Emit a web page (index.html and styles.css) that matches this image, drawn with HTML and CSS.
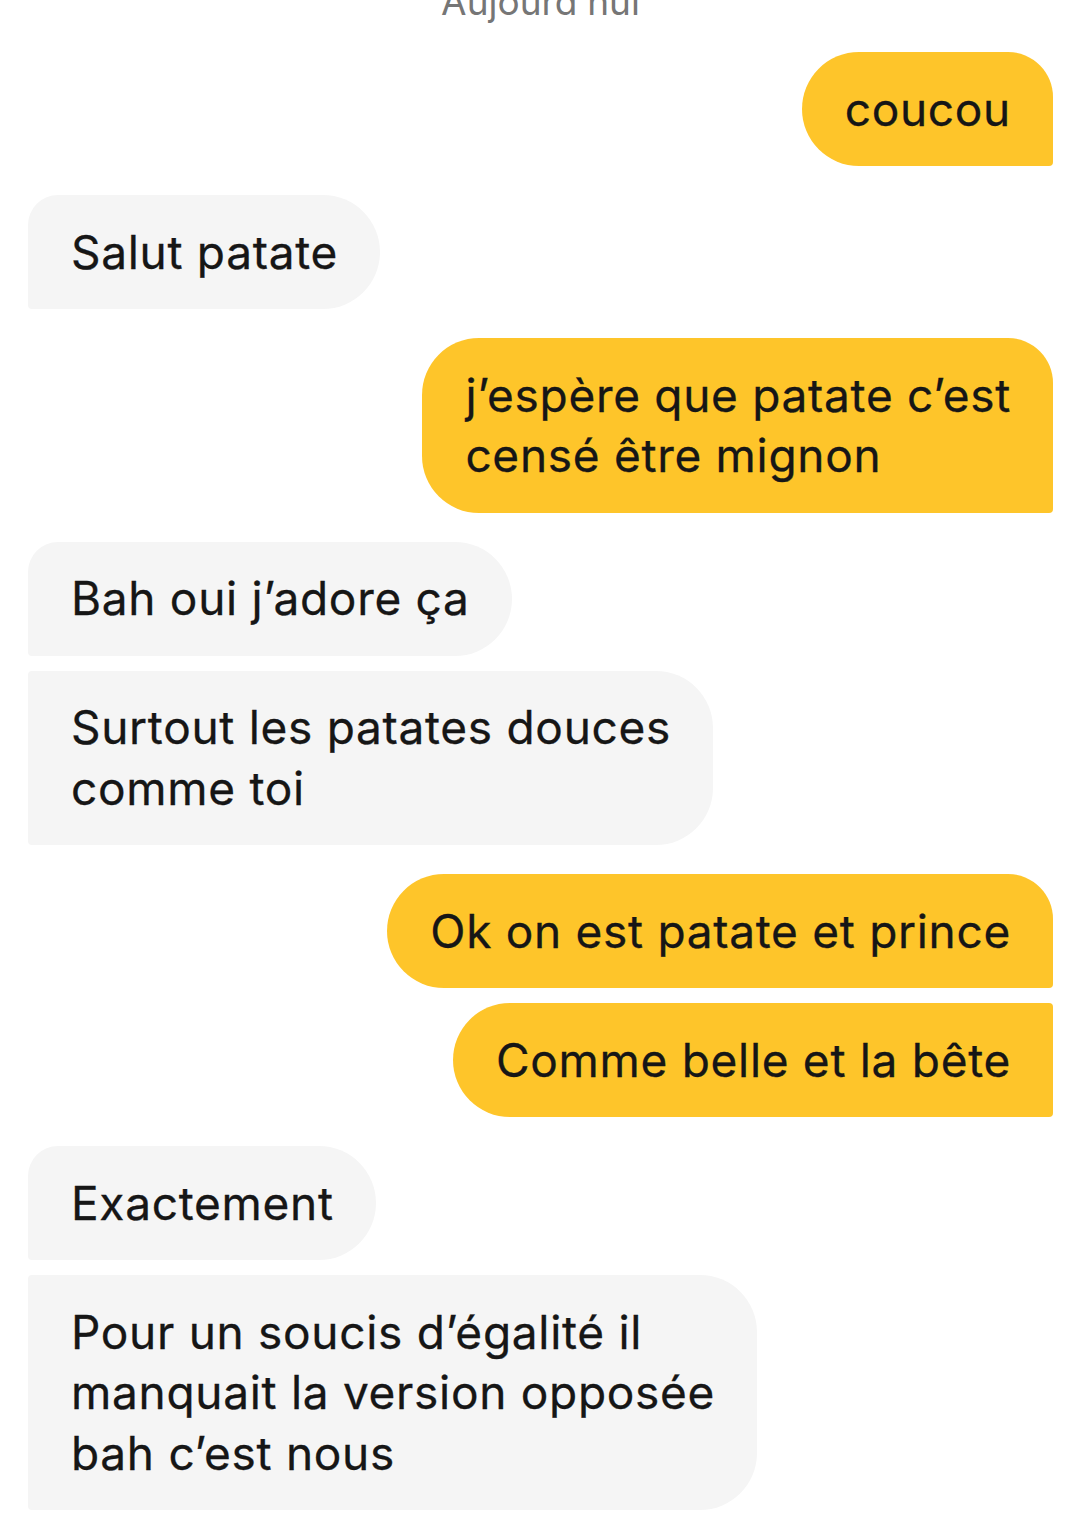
FILE: index.html
```html
<!DOCTYPE html>
<html lang="fr">
<head>
<meta charset="utf-8">
<link rel="stylesheet" href="styles.css">
</head>
<body>
<div class="chat">
  <div class="date">Aujourd’hui</div>

  <div class="group out">
    <div class="bubble first">coucou</div>
  </div>

  <div class="group in">
    <div class="bubble first">Salut patate</div>
  </div>

  <div class="group out">
    <div class="bubble first">j’espère que patate c’est<br>censé être mignon</div>
  </div>

  <div class="group in">
    <div class="bubble first">Bah oui j’adore ça</div>
    <div class="bubble">Surtout les patates douces<br>comme toi</div>
  </div>

  <div class="group out">
    <div class="bubble first">Ok on est patate et prince</div>
    <div class="bubble">Comme belle et la bête</div>
  </div>

  <div class="group in">
    <div class="bubble first">Exactement</div>
    <div class="bubble">Pour un soucis d’égalité il<br>manquait la version opposée<br>bah c’est nous</div>
  </div>
</div>
</body>
</html>
```

FILE: styles.css
```css
html, body {
  margin: 0;
  padding: 0;
  background: #ffffff;
}

.chat {
  display: flex;
  flex-direction: column;
  gap: 29px;
  padding: 0 27px 0 28px;
  font-family: Inter, "Noto Sans", sans-serif;
  color: #161616;
}

.date {
  text-align: center;
  font-size: 37px;
  line-height: 40px;
  color: #767676;
  margin-top: -18px;
  margin-bottom: 1px;
}

.group {
  display: flex;
  flex-direction: column;
  gap: 15px;
}

.group.out {
  align-items: flex-end;
}

.group.in {
  align-items: flex-start;
}

.bubble {
  font-size: 46px;
  line-height: 60.5px;
  letter-spacing: 0.7px;
  -webkit-text-stroke: 0.3px #161616;
  padding: 26.75px 42px 26.75px 43px;
}

.out .bubble {
  background: #fec52a;
  border-radius: 57px 4px 4px 57px;
}

.out .bubble.first {
  border-top-right-radius: 45px;
}

.in .bubble {
  background: #f5f5f5;
  border-radius: 4px 57px 57px 4px;
}

.in .bubble.first {
  border-top-left-radius: 30px;
}
```
